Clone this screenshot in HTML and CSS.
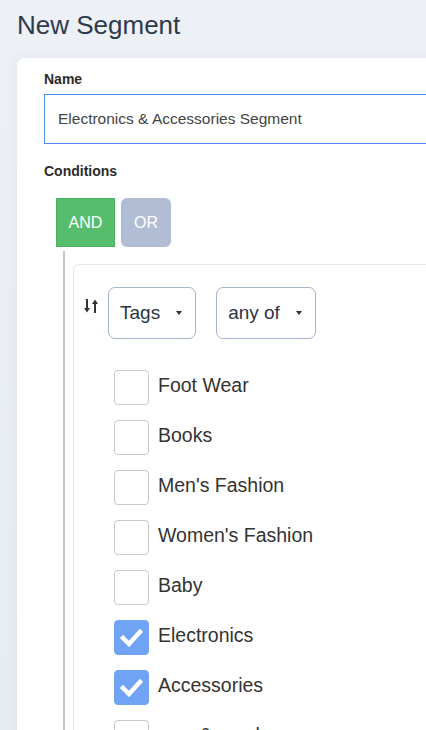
FILE: index.html
```html
<!DOCTYPE html>
<html lang="en">
<head>
<meta charset="utf-8">
<title>New Segment</title>
<link rel="stylesheet" href="styles.css">
</head>
<body>
<div class="page">
  <h1 class="title">New Segment</h1>
  <div class="card">
    <label class="field-label">Name</label>
    <div class="text-input">Electronics &amp; Accessories Segment</div>
    <label class="field-label conditions-label">Conditions</label>
    <div class="logic">
      <button class="logic-btn and">AND</button>
      <button class="logic-btn or">OR</button>
    </div>
    <div class="tree">
      <div class="rule">
        <div class="rule-head">
          <svg class="sort-icon" width="15" height="14" viewBox="0 0 15 14">
            <rect x="2" y="0" width="2" height="10" fill="#333"/>
            <polygon points="0,9 6,9 3,13.5" fill="#333"/>
            <rect x="10" y="4" width="2" height="10" fill="#333"/>
            <polygon points="8,5 14,5 11,0.5" fill="#333"/>
          </svg>
          <div class="select">Tags <span class="caret"></span></div>
          <div class="select">any of <span class="caret"></span></div>
        </div>
        <ul class="options">
          <li class="option"><span class="box"></span><span class="opt-label">Foot Wear</span></li>
          <li class="option"><span class="box"></span><span class="opt-label">Books</span></li>
          <li class="option"><span class="box"></span><span class="opt-label">Men's Fashion</span></li>
          <li class="option"><span class="box"></span><span class="opt-label">Women's Fashion</span></li>
          <li class="option"><span class="box"></span><span class="opt-label">Baby</span></li>
          <li class="option"><span class="box checked"><svg width="35" height="35" viewBox="0 0 35 35"><polyline points="9,18 15,24 26,12" fill="none" stroke="#fff" stroke-width="4.5" stroke-linecap="square"/></svg></span><span class="opt-label">Electronics</span></li>
          <li class="option"><span class="box checked"><svg width="35" height="35" viewBox="0 0 35 35"><polyline points="9,18 15,24 26,12" fill="none" stroke="#fff" stroke-width="4.5" stroke-linecap="square"/></svg></span><span class="opt-label">Accessories</span></li>
          <li class="option"><span class="box"></span><span class="opt-label">new &amp; used</span></li>
        </ul>
      </div>
    </div>
  </div>
</div>
</body>
</html>
```

FILE: styles.css
```css
html, body {
  margin: 0;
  padding: 0;
  height: 100%;
  overflow: hidden;
}
body {
  background: linear-gradient(180deg, #edf1f6 0%, #e7ecf3 100%);
  font-family: "Liberation Sans", Arial, sans-serif;
  color: #333;
}
.page {
  padding-left: 17px;
  width: 520px;
}
.title {
  margin: 0;
  height: 58px;
  line-height: 50px;
  font-size: 26px;
  font-weight: normal;
  color: #2e3a4d;
}
.card {
  background: #fff;
  border-radius: 8px 0 0 0;
  box-shadow: 0 0 12px rgba(120, 140, 170, 0.12);
  padding: 13px 0 40px 27px;
  min-height: 700px;
}
.field-label {
  display: block;
  font-size: 14px;
  font-weight: bold;
  line-height: 16px;
  color: #2b2b2b;
  margin-bottom: 7px;
}
.text-input {
  box-sizing: border-box;
  height: 50px;
  width: 440px;
  border: 1px solid #4f8ef0;
  padding-left: 13px;
  font-size: 15.5px;
  line-height: 48px;
  color: #444;
}
.conditions-label {
  margin-top: 19px;
  margin-bottom: 19px;
}
.logic {
  display: flex;
  gap: 6px;
  margin-left: 12px;
}
.logic-btn {
  height: 49px;
  border: none;
  font-family: "Liberation Sans", Arial, sans-serif;
  font-size: 16px;
  color: #fff;
  padding: 0;
}
.logic-btn.and {
  width: 59px;
  background: #55bd6c;
  border: 1px solid #4cb063;
}
.logic-btn.or {
  width: 50px;
  background: #b0bdd5;
  border-radius: 6px;
}
.tree {
  margin-left: 19px;
  margin-top: 4px;
  border-left: 2px solid #c6c6c6;
  padding: 13px 0 0 8px;
}
.rule {
  border: 1px solid #e6e6e6;
  border-right: none;
  border-bottom: none;
  border-radius: 6px 0 0 0;
  padding: 22px 0 0 10px;
}
.rule-head {
  display: flex;
  align-items: flex-start;
}
.sort-icon {
  margin-top: 12px;
  margin-right: 9px;
}
.select {
  box-sizing: border-box;
  height: 52px;
  display: flex;
  align-items: center;
  gap: 16px;
  padding: 0 13px 0 11px;
  border: 1px solid #a7b5cf;
  border-radius: 7px;
  font-size: 19px;
  color: #2b3445;
  margin-right: 20px;
}
.caret {
  width: 0;
  height: 0;
  border-left: 3.5px solid transparent;
  border-right: 3.5px solid transparent;
  border-top: 4px solid #333;
}
.options {
  list-style: none;
  margin: 31px 0 0 0;
  padding: 0 0 0 30px;
  display: flex;
  flex-direction: column;
  gap: 15px;
}
.option {
  display: flex;
  align-items: center;
  gap: 9px;
  height: 35px;
}
.box {
  box-sizing: border-box;
  width: 35px;
  height: 35px;
  border: 1px solid #c9c9c9;
  border-radius: 4px;
  flex: none;
  display: block;
}
.box.checked {
  background: #70a2f5;
  border-color: #70a2f5;
}
.box.checked svg {
  display: block;
  margin: -1px;
}
.opt-label {
  font-size: 19.5px;
  color: #333;
  margin-top: -4px;
}
```
